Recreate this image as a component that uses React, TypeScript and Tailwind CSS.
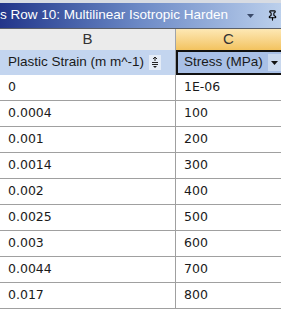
import { Pin } from 'lucide-react'

const ROWS: Array<[string, string]> = [
  ['0', '1E-06'],
  ['0.0004', '100'],
  ['0.001', '200'],
  ['0.0014', '300'],
  ['0.002', '400'],
  ['0.0025', '500'],
  ['0.003', '600'],
  ['0.0044', '700'],
  ['0.017', '800'],
]

const SANS = { fontFamily: '"Liberation Sans", Arial, sans-serif' }

function SortIcon() {
  return (
    <span className="flex h-[15px] w-[12px] shrink-0 items-center justify-center bg-[#e4ecf7]">
      <svg width="8" height="11" viewBox="0 0 8 11" aria-hidden="true">
        <path d="M4 0 L4 4 M2 2 L4 0 L6 2" stroke="#222" strokeWidth="1" fill="none" />
        <path d="M1 5.5 H7 M1 7.5 H7" stroke="#222" strokeWidth="1" />
        <path d="M2 9 L6 9 L4 11 Z" fill="#222" />
      </svg>
    </span>
  )
}

export default function App() {
  return (
    <div
      className="h-[309px] w-[281px] overflow-hidden bg-white text-[#1a1a1a]"
      style={{ fontFamily: '"DejaVu Sans", Verdana, sans-serif' }}
    >
      <div className="h-[3px] bg-[#d8dce3]" />
      <div
        className="flex h-[25px] items-center bg-gradient-to-r from-[#23358a] via-[#6d8ac6] to-[#bcd0ec] text-white"
        style={SANS}
      >
        <span className="flex-1 whitespace-nowrap text-[13.5px]">
          s Row 10: Multilinear Isotropic Harden
        </span>
        <svg width="7" height="4" viewBox="0 0 7 4" className="mr-[13px] shrink-0" aria-hidden="true">
          <path d="M0 0 H7 L3.5 4 Z" fill="#3a4a6a" />
        </svg>
        <Pin className="mr-[3px] h-[11px] w-[11px] shrink-0 text-black" strokeWidth={2.5} />
      </div>
      <div className="h-[1px] bg-[#5a5f69]" />
      <div className="flex h-[21px] text-[15px]" style={SANS}>
        <div className="flex w-[176px] items-center justify-center border-r border-[#9ea3ab] bg-[#ebebeb] text-[#333]">
          B
        </div>
        <div className="flex flex-1 items-center justify-center bg-gradient-to-b from-[#fde8b4] to-[#f3c35e] text-[#333]">
          C
        </div>
      </div>
      <div className="flex h-[25px] text-[13.5px]" style={SANS}>
        <div className="flex w-[176px] items-center justify-between border-r border-[#9ea3ab] bg-[#c3d5ef] pl-[8px] pr-[14px]">
          <span className="whitespace-nowrap">Plastic Strain (m m^-1)</span>
          <SortIcon />
        </div>
        <div className="flex flex-1 items-center justify-between border-y-[2px] border-l-[2px] border-[#111] bg-[#a9c0e6] pl-[6px]">
          <span className="whitespace-nowrap">Stress (MPa)</span>
          <span className="flex h-[17px] w-[13px] shrink-0 items-center justify-center bg-[#c9d8ee]">
            <svg width="7" height="4" viewBox="0 0 7 4" aria-hidden="true">
              <path d="M0 0 H7 L3.5 4 Z" fill="#111" />
            </svg>
          </span>
        </div>
      </div>
      {ROWS.map(([strain, stress]) => (
        <div key={strain} className="flex h-[26px] border-b border-[#a0a0a0] text-[12.5px]">
          <div className="flex w-[176px] items-center border-r border-[#a0a0a0] pl-[8px]">
            {strain}
          </div>
          <div className="flex flex-1 items-center pl-[8px]">{stress}</div>
        </div>
      ))}
    </div>
  )
}
